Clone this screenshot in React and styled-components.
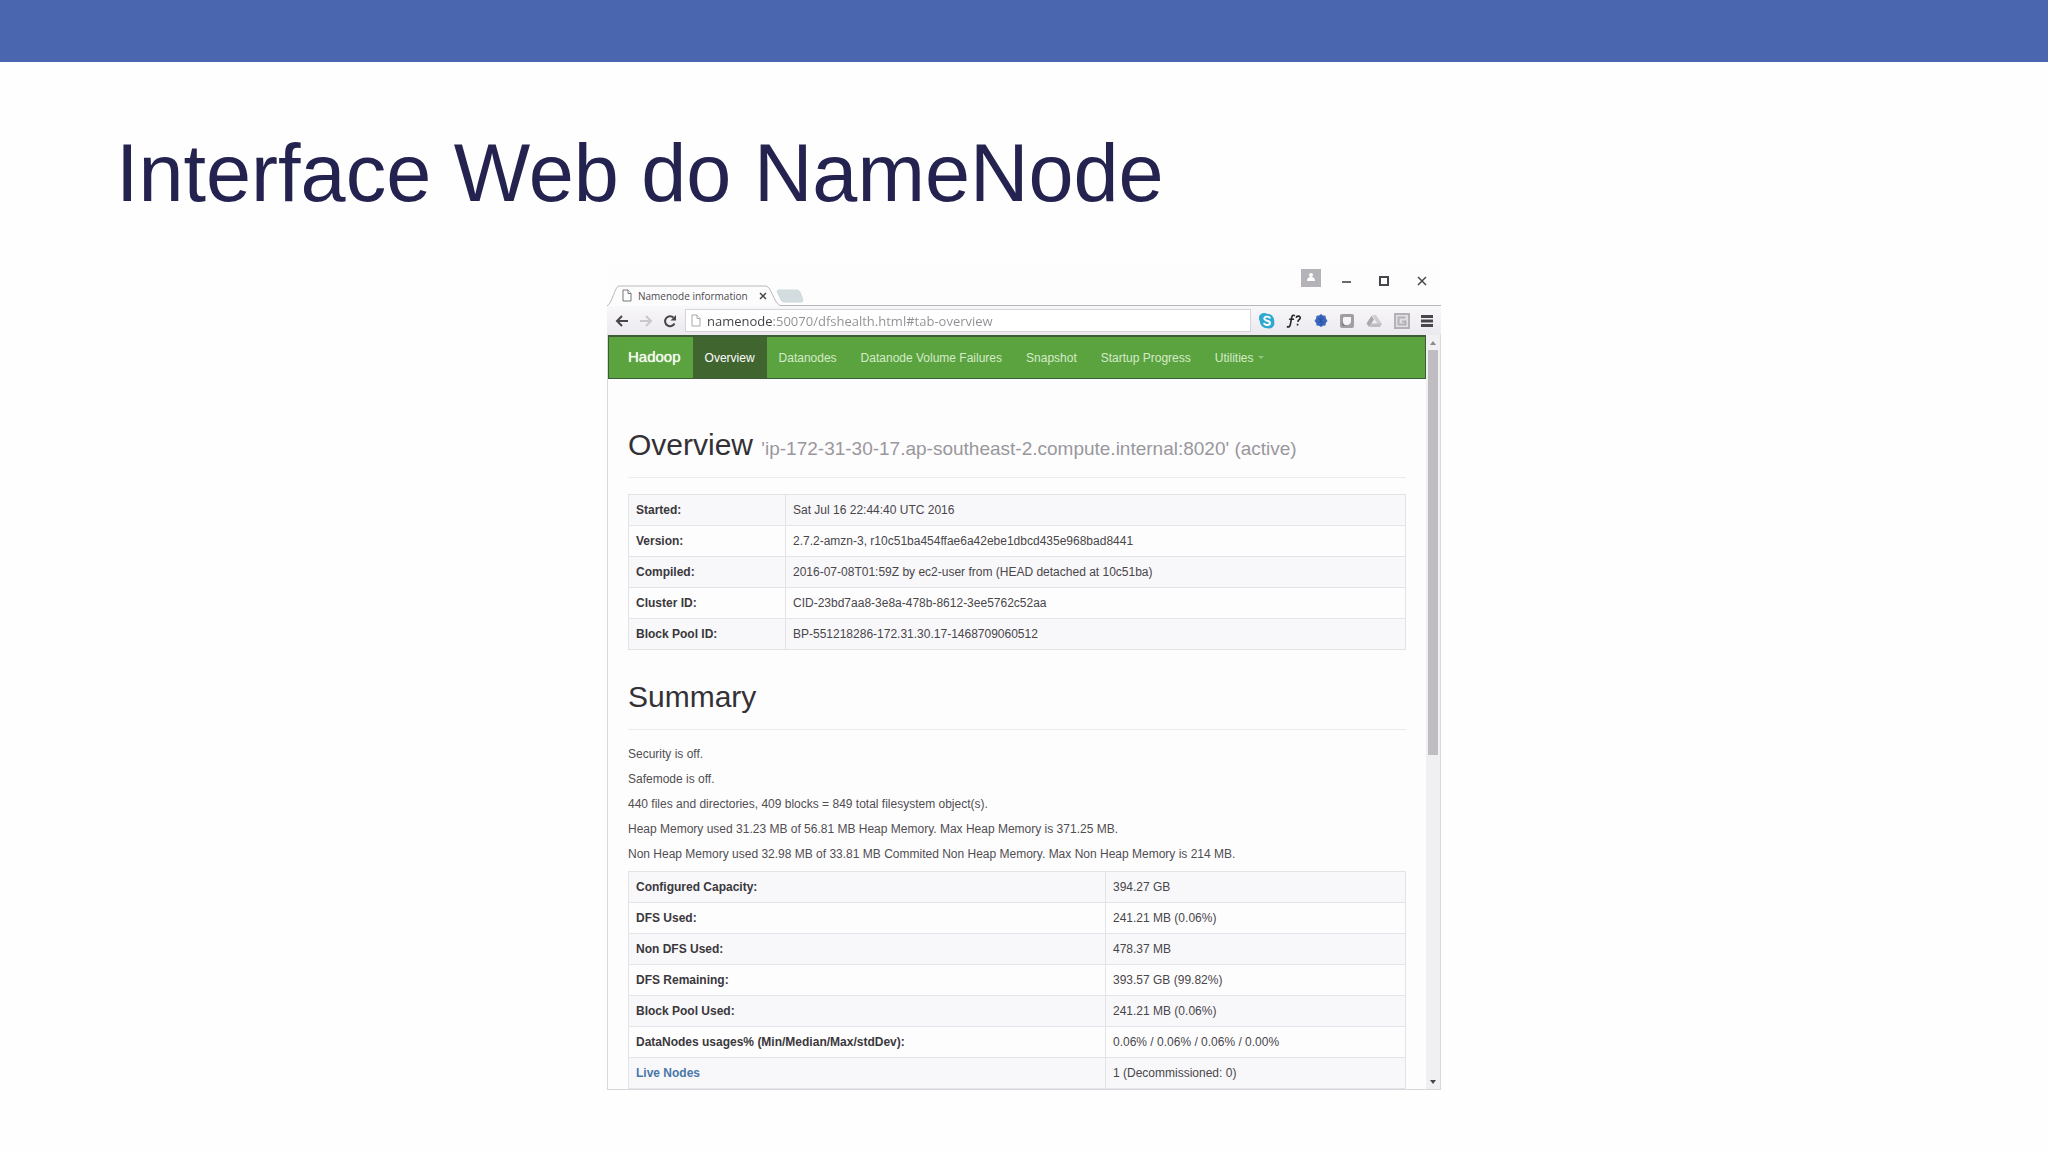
import React from "react";
import styled, { createGlobalStyle } from "styled-components";

const sans = `"Liberation Sans", Arial, sans-serif`;
const chromeFont = `"Open Sans", "Noto Sans", sans-serif`;

const navy = "#242350";
const blue = "#4a66ae";
const green = "#5ba33f";
const darkGreen = "#40652f";
const line = "#e6e3e8";

const GlobalStyle = createGlobalStyle`
  * {
    box-sizing: border-box;
  }

  body {
    margin: 0;
    background: #fefefe;
    font-family: ${sans};
  }
`;

const Slide = styled.main`
  padding-bottom: 62px;
`;

const Banner = styled.div`
  height: 62px;
  background: ${blue};
`;

const SlideTitle = styled.h1`
  margin: 0;
  padding: 64px 116px 42px;
  color: ${navy};
  font-size: 81px;
  font-weight: 400;
  line-height: 94px;
`;

const Browser = styled.section`
  max-width: 834px;
  margin: 0 auto;
  background: #fefdfe;
`;

/* window frame */

const TabStrip = styled.div`
  display: flex;
  justify-content: space-between;
  height: 44px;
  border-bottom: 1px solid #b9b7bd;
`;

const Tabs = styled.div`
  display: flex;
  align-items: flex-end;
`;

const Tab = styled.div`
  position: relative;
  display: flex;
  align-items: center;
  width: 174px;
  height: 21px;
  margin-bottom: -1px;
  padding: 0 14px 0 15px;
  color: #4c4a50;
  font: 10px/20px ${chromeFont};
`;

const TabShape = styled.svg`
  position: absolute;
  inset: 0;
  width: 100%;
  height: 100%;
`;

const FileIcon = styled.svg`
  position: relative;
  flex: none;
`;

const TabLabel = styled.span`
  position: relative;
  flex: 1;
  padding-left: 6px;
  white-space: nowrap;
`;

const IconButton = styled.button`
  position: relative;
  display: flex;
  flex: none;
  padding: 0;
  border: 0;
  background: none;
  color: ${props => props.$color || "#48464c"};

  svg {
    display: block;
  }
`;

const NewTab = styled(IconButton)`
  margin: 0 0 2px -5px;
`;

const WindowButtons = styled.div`
  display: flex;
  align-items: center;
  gap: 28px;
  height: 38px;
  padding-right: 14px;
`;

const ProfileButton = styled(IconButton)`
  margin-right: -8px;
  padding-bottom: 6px;
`;

const Toolbar = styled.div`
  display: flex;
  align-items: center;
  gap: 8px;
  height: 29px;
  padding: 0 8px;
  background: linear-gradient(#f8f7f9, #ebe9ee);
`;

const ToolGroup = styled.div`
  display: flex;
  gap: 10px;
`;

const Extensions = styled.div`
  display: flex;
  justify-content: space-between;
  width: 174px;
`;

const AddressBar = styled.label`
  display: flex;
  flex: 1;
  align-items: center;
  gap: 6px;
  height: 23px;
  padding-left: 5px;
  border: 1px solid #d6d3d9;
  background: #fff;
`;

const AddressInput = styled.input`
  flex: 1;
  min-width: 0;
  padding: 0;
  border: 0;
  outline: 0;
  background: linear-gradient(90deg, #3f3d42 66px, #8f8d92 66px);
  background-clip: text;
  color: transparent;
  font: 13px/20px ${chromeFont};
`;

/* page inside the window */

const Viewport = styled.div`
  display: flex;
  border: 1px solid #d9d7dc;
  border-top: 0;
`;

const Page = styled.div`
  flex: 1;
  min-width: 0;
`;

const Navbar = styled.nav`
  display: flex;
  height: 44px;
  border: 1px solid #3d5c35;
  border-top-width: 2px;
  background: ${green};
`;

const Brand = styled.a`
  padding: 0 12px 0 19px;
  color: #f4fbef;
  font-size: 15px;
  line-height: 40px;
  text-decoration: none;
  text-shadow: 0 0 1px #f4fbef;
`;

const NavLink = styled.a`
  display: flex;
  align-items: center;
  gap: 5px;
  padding: 0 12px;
  background: ${props => (props.$active ? darkGreen : "none")};
  color: ${props => (props.$active ? "#fff" : "#d5ebc9")};
  font-size: 12px;
  line-height: 40px;
  text-decoration: none;
  white-space: nowrap;
`;

const Content = styled.div`
  padding: 49px 20px 0;
`;

const PageHeader = styled.h2`
  margin: 0 0 16px;
  padding-bottom: 15px;
  border-bottom: 1px solid #eeebf0;
  color: #333136;
  font-size: 30px;
  font-weight: 400;
  line-height: 34px;

  small {
    color: #99979c;
    font-size: 19px;
    line-height: 1;
  }
`;

const SummaryHeader = styled(PageHeader)`
  margin-top: 30px;
`;

const Table = styled.table`
  width: 100%;
  border-collapse: collapse;
  table-layout: fixed;
  color: #48464a;
  font-size: 12px;
  line-height: 16px;

  th,
  td {
    height: 31px;
    padding: 0 7px;
    border: 1px solid ${line};
    text-align: left;
  }

  th {
    width: ${props => props.$labelWidth};
    color: #3a383c;
  }

  tr:nth-child(odd) {
    background: #f8f7fa;
  }

  a {
    color: #4a78a8;
    text-decoration: none;
  }
`;

const Note = styled.p`
  margin: 0 0 9px;
  color: #504e52;
  font-size: 12px;
  line-height: 16px;
`;

const Scrollbar = styled.div`
  display: flex;
  flex-direction: column;
  align-items: center;
  width: 14px;
  background: #f0eff2;
`;

const ScrollButton = styled(IconButton)`
  align-items: center;
  justify-content: center;
  width: 14px;
  height: 15px;
`;

const ScrollTrack = styled.div`
  flex: 1;
  width: 10px;
`;

const ScrollThumb = styled.div`
  height: 56%;
  background: #bfbdc1;
`;

const PageIcon = ({ color = "#77757a" }) => (
  <FileIcon width="10" height="13" viewBox="0 0 10 13" fill="#fff" stroke={color}>
    <path d="M1 1h5l3 3.5V12H1z" />
    <path d="M6 1v3.5h3" />
  </FileIcon>
);

const details = [
  ["Started:", "Sat Jul 16 22:44:40 UTC 2016"],
  ["Version:", "2.7.2-amzn-3, r10c51ba454ffae6a42ebe1dbcd435e968bad8441"],
  ["Compiled:", "2016-07-08T01:59Z by ec2-user from (HEAD detached at 10c51ba)"],
  ["Cluster ID:", "CID-23bd7aa8-3e8a-478b-8612-3ee5762c52aa"],
  ["Block Pool ID:", "BP-551218286-172.31.30.17-1468709060512"],
];

const notes = [
  "Security is off.",
  "Safemode is off.",
  "440 files and directories, 409 blocks = 849 total filesystem object(s).",
  "Heap Memory used 31.23 MB of 56.81 MB Heap Memory. Max Heap Memory is 371.25 MB.",
  "Non Heap Memory used 32.98 MB of 33.81 MB Commited Non Heap Memory. Max Non Heap Memory is 214 MB.",
];

const usage = [
  ["Configured Capacity:", "394.27 GB"],
  ["DFS Used:", "241.21 MB (0.06%)"],
  ["Non DFS Used:", "478.37 MB"],
  ["DFS Remaining:", "393.57 GB (99.82%)"],
  ["Block Pool Used:", "241.21 MB (0.06%)"],
  ["DataNodes usages% (Min/Median/Max/stdDev):", "0.06% / 0.06% / 0.06% / 0.00%"],
  ["Live Nodes", "1 (Decommissioned: 0)", "#live-nodes"],
];

const links = ["Overview", "Datanodes", "Datanode Volume Failures", "Snapshot", "Startup Progress", "Utilities"];

const InfoTable = ({ rows, labelWidth }) => (
  <Table $labelWidth={labelWidth}>
    <tbody>
      {rows.map(([label, value, href]) => (
        <tr key={label}>
          <th scope="row">{href ? <a href={href}>{label}</a> : label}</th>
          <td>{value}</td>
        </tr>
      ))}
    </tbody>
  </Table>
);

const Frame = () => (
  <TabStrip>
    <Tabs>
      <Tab>
        <TabShape viewBox="0 0 174 21" preserveAspectRatio="none">
          <path d="M0 21C5 19 8 1 12 1H159C164 1 167 19 174 21" fill="#fdfcfd" stroke="#b9b7bd" />
        </TabShape>
        <PageIcon />
        <TabLabel>Namenode information</TabLabel>
        <IconButton aria-label="Close tab">
          <svg width="8" height="8" viewBox="0 0 8 8" stroke="currentColor" strokeWidth="1.5">
            <path d="M1 1l6 6M7 1L1 7" />
          </svg>
        </IconButton>
      </Tab>
      <NewTab aria-label="New tab">
        <svg width="28" height="14" viewBox="0 0 28 14">
          <path d="M2 1h19q2 0 3 2l3 8q0 2-2 2H8q-2 0-3-2L1 2z" fill="#d3dcdf" stroke="#d0d8db" />
        </svg>
      </NewTab>
    </Tabs>
    <WindowButtons>
      <ProfileButton aria-label="Profile">
        <svg width="20" height="18" viewBox="0 0 20 18">
          <path d="M0 0h20v18H0z" fill="#b5b3b7" />
          <circle cx="10" cy="6" r="2" fill="#fff" />
          <path d="M6 12q0-4 4-4t4 4z" fill="#fff" />
        </svg>
      </ProfileButton>
      <IconButton aria-label="Minimize">
        <svg width="10" height="10" viewBox="0 0 10 10">
          <path d="M1 5h9v2H1z" fill="#6b696e" />
        </svg>
      </IconButton>
      <IconButton aria-label="Maximize">
        <svg width="10" height="10" viewBox="0 0 10 10" fill="none" stroke="currentColor" strokeWidth="2">
          <path d="M1 1h8v8H1z" />
        </svg>
      </IconButton>
      <IconButton aria-label="Close">
        <svg width="10" height="10" viewBox="0 0 10 10" stroke="currentColor" strokeWidth="1.5">
          <path d="M1 1l8 8M9 1L1 9" />
        </svg>
      </IconButton>
    </WindowButtons>
  </TabStrip>
);

const BrowserTools = () => (
  <Toolbar>
    <ToolGroup>
      <IconButton aria-label="Back">
        <svg width="14" height="14" viewBox="0 0 14 14" fill="none" stroke="currentColor" strokeWidth="2">
          <path d="M13 7H2M7 2L2 7l5 5" />
        </svg>
      </IconButton>
      <IconButton aria-label="Forward" $color="#c9c7cc">
        <svg width="14" height="14" viewBox="0 0 14 14" fill="none" stroke="currentColor" strokeWidth="2">
          <path d="M1 7h11M7 2l5 5-5 5" />
        </svg>
      </IconButton>
      <IconButton aria-label="Reload">
        <svg width="14" height="14" viewBox="0 0 14 14" fill="none" stroke="currentColor" strokeWidth="2">
          <path d="M11.5 9.5A5 5 0 1 1 10.500 3.500" />
          <path d="M13 1v5.500H7.500z" fill="currentColor" stroke="none" />
        </svg>
      </IconButton>
    </ToolGroup>
    <AddressBar>
      <PageIcon color="#aaa8a4" />
      <AddressInput aria-label="Address" defaultValue="namenode:50070/dfshealth.html#tab-overview" />
    </AddressBar>
    <Extensions>
      <IconButton aria-label="Skype">
        <svg width="16" height="16" viewBox="0 0 16 16">
          <path d="M5 0a5 5 0 0 1 3 .8A7 7 0 0 1 15.2 9 5 5 0 0 1 9 15.2 7 7 0 0 1 .8 8 5 5 0 0 1 5 0z" fill="#2fa9d2" />
          <path d="M11 5.5C10.5 3 5.3 3 5.3 5.6c0 2.8 5.7 1.5 5.7 4.3 0 2.7-5.5 2.700-6 0" fill="none" stroke="#fff" strokeWidth="1.9" />
        </svg>
      </IconButton>
      <IconButton aria-label="Find function" $color="#252427">
        <svg width="16" height="16" viewBox="0 0 18 16" fill="none" stroke="currentColor" strokeWidth="1.8">
          <path d="M10 2.200C8 .5 6.800 2 6.300 4.500L5 11.500C4.500 14.500 3 15.500 1 14.200M3.500 6H9" />
          <path d="M11.500 4.500C12 1.500 16.500 2 16 4.800 15.700 6.700 13.700 6.500 13.300 9M13 11v2" />
        </svg>
      </IconButton>
      <IconButton aria-label="Blue extension">
        <svg width="14" height="16" viewBox="0 0 14 16">
          <path d="M7 1l2 1.5 2.5.2.3 2.5L13.5 8l-1.700 2-.3 2.500-2.500.3L7 14l-2-1.200-2.500-.3L2.200 10 .5 8l1.700-2.800.3-2.500L5 2.500z" fill="#3b68bd" />
          <path d="M4 5l6 5M10 5l-6 5M7 3v9" stroke="#2450a5" />
        </svg>
      </IconButton>
      <IconButton aria-label="Note extension">
        <svg width="16" height="16" viewBox="0 0 16 16">
          <rect x="1" y="1" width="14" height="14" rx="2" fill="#a09ea3" />
          <path d="M5 4h7v5q-1 3-4 3H6q-2-1-2-3V5z" fill="#f5f4f6" />
          <path d="M3 8q1 5 6 5H3z" fill="#817f84" />
        </svg>
      </IconButton>
      <IconButton aria-label="Drive">
        <svg width="16" height="16" viewBox="0 0 16 16" fill="#bebcc0">
          <path d="M6 2h4l6 9h-4.5z" fill="#cfcdd1" />
          <path d="M5.5 2.800L8 6.500 3 14 .5 10.500z" fill="#aaa8ad" />
          <path d="M5.5 10.500H16L14 14H3.500z" />
        </svg>
      </IconButton>
      <IconButton aria-label="Capture">
        <svg width="16" height="16" viewBox="0 0 16 16" fill="none" stroke="#b3b1b6" strokeWidth="2">
          <path d="M1 1h14v14H1z" fill="#e1dfe3" />
          <path d="M11.5 4.500h-7v7h7v-3H8" />
        </svg>
      </IconButton>
      <IconButton aria-label="Menu">
        <svg width="12" height="16" viewBox="0 0 12 16" fill="currentColor">
          <path d="M0 2h12v3H0zM0 6.500h12v3H0zM0 11h12v3H0z" />
        </svg>
      </IconButton>
    </Extensions>
  </Toolbar>
);

const App = () => (
  <>
    <GlobalStyle />
    <Slide>
      <Banner />
      <SlideTitle>Interface Web do NameNode</SlideTitle>
      <Browser>
        <Frame />
        <BrowserTools />
        <Viewport>
          <Page>
            <Navbar>
              <Brand href="#hadoop">Hadoop</Brand>
              {links.map((link, i) => (
                <NavLink key={link} href={`#tab-${i}`} $active={i === 0}>
                  {link}
                  {link === "Utilities" && (
                    <svg width="6" height="3" viewBox="0 0 6 3">
                      <path d="M0 0h6L3 3z" fill="#93c47d" />
                    </svg>
                  )}
                </NavLink>
              ))}
            </Navbar>
            <Content>
              <PageHeader>
                Overview <small>'ip-172-31-30-17.ap-southeast-2.compute.internal:8020' (active)</small>
              </PageHeader>
              <InfoTable rows={details} labelWidth="157px" />
              <SummaryHeader>Summary</SummaryHeader>
              {notes.map(note => (
                <Note key={note}>{note}</Note>
              ))}
              <InfoTable rows={usage} labelWidth="477px" />
            </Content>
          </Page>
          <Scrollbar>
            <ScrollButton aria-label="Scroll up" $color="#8b898e">
              <svg width="6" height="4" viewBox="0 0 6 4">
                <path d="M0 4l3-4 3 4z" fill="currentColor" />
              </svg>
            </ScrollButton>
            <ScrollTrack>
              <ScrollThumb />
            </ScrollTrack>
            <ScrollButton aria-label="Scroll down">
              <svg width="6" height="4" viewBox="0 0 6 4">
                <path d="M0 0h6L3 4z" fill="currentColor" />
              </svg>
            </ScrollButton>
          </Scrollbar>
        </Viewport>
      </Browser>
    </Slide>
  </>
);

export default App;
